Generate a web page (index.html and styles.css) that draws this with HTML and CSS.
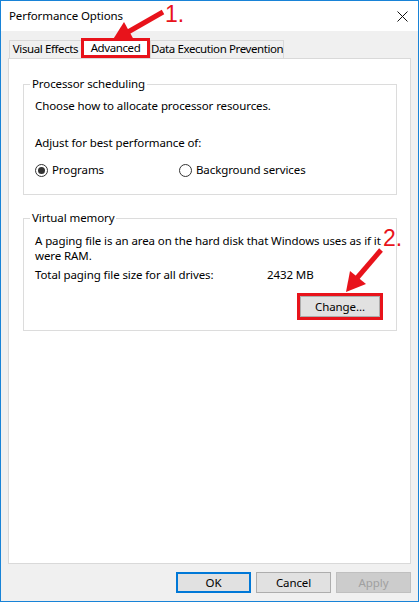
FILE: index.html
```html
<!DOCTYPE html>
<html lang="en">
<head>
    <meta charset="UTF-8">
    <title>Performance Options</title>
    <link rel="stylesheet" href="styles.css">
</head>
<body>
    <div class="window">
        <div class="titlebar">
            <span class="title">Performance Options</span>
            <svg class="close" width="11" height="11" viewBox="0 0 11 11">
                <path d="M0.5 0.5L10.5 10.5M10.5 0.5L0.5 10.5" stroke="#111" stroke-width="1"/>
            </svg>
        </div>

        <div class="content">
            <div class="tabs">
                <div class="tab tab-visual">Visual Effects</div>
                <div class="tab active">Advanced</div>
                <div class="tab tab-dep">Data Execution Prevention</div>
            </div>

            <div class="panel">
                <fieldset class="group group-cpu">
                    <legend>Processor scheduling</legend>
                    <p class="intro">Choose how to allocate processor resources.</p>
                    <p class="adjust">Adjust for best performance of:</p>
                    <div class="radios">
                        <label class="radio"><input type="radio" name="sched" checked> Programs</label>
                        <label class="radio"><input type="radio" name="sched"> Background services</label>
                    </div>
                </fieldset>

                <fieldset class="group group-vm">
                    <legend>Virtual memory</legend>
                    <p class="vm-desc">A paging file is an area on the hard disk that Windows uses as if it were RAM.</p>
                    <div class="vm-total">
                        <span>Total paging file size for all drives:</span>
                        <span>2432 MB</span>
                    </div>
                    <div class="vm-actions">
                        <button class="btn marked">Change...</button>
                    </div>
                </fieldset>
            </div>

            <div class="footer">
                <button class="btn default">OK</button>
                <button class="btn">Cancel</button>
                <button class="btn" disabled>Apply</button>
            </div>
        </div>

        <!-- red tutorial markers drawn over the dialog -->
        <svg class="annotations" width="419" height="602" viewBox="0 0 419 602">
            <line x1="163" y1="12" x2="128" y2="32" stroke="#e8131b" stroke-width="5"/>
            <polygon points="112,41 134,40 124,22" fill="#e8131b"/>
            <text x="165" y="22" class="step">1.</text>

            <line x1="381" y1="250" x2="357" y2="278" stroke="#e8131b" stroke-width="5"/>
            <polygon points="346,292 366,284 350,271" fill="#e8131b"/>
            <text x="383" y="246" class="step">2.</text>
        </svg>
    </div>
</body>
</html>
```

FILE: styles.css
```css
body {
    margin: 0;
    padding: 0;
    font-family: "Noto Sans", sans-serif;
    font-size: 11.5px;
    letter-spacing: -0.1px;
    color: #000;
}
.window {
    position: relative;
    width: 419px;
    height: 602px;
    box-sizing: border-box;
    border: 1px solid #1883d7;
    background-color: #f0f0f0;
    display: flex;
    flex-direction: column;
}
.titlebar {
    height: 30px;
    background: #ffffff;
    display: flex;
    align-items: center;
    justify-content: space-between;
    padding: 0 10px 0 8px;
}
.title {
    line-height: 16px;
}
.close {
    display: block;
}
.content {
    flex: 1;
    display: flex;
    flex-direction: column;
    padding: 0 7px;
}
.tabs {
    display: flex;
    align-items: flex-end;
    height: 20px;
    margin-top: 7px;
    padding-left: 1px;
}
.tab {
    height: 18px;
    box-sizing: border-box;
    border: 1px solid #d9d9d9;
    border-bottom: none;
    line-height: 16px;
    letter-spacing: -0.4px;
    white-space: nowrap;
    text-align: center;
}
.tab-visual {
    width: 73px;
}
.tab.active {
    width: 69px;
    height: 20px;
    border: 3px solid #e8131b;
    background: #ffffff;
    line-height: 14px;
    margin-left: -1px;
}
.tab-dep {
    width: 134px;
}
.panel {
    flex: 1;
    background: #ffffff;
    border: 1px solid #d9d9d9;
    padding: 17px 13px 0 14px;
}
.group {
    margin: 0;
    border: 1px solid #dcdcdc;
    padding: 0 12px 16px 11px;
}
.group legend {
    padding: 0 2px;
    margin-left: -5px;
    line-height: 16px;
}
.group p {
    margin: 0;
    line-height: 16px;
}
.intro {
    padding-top: 6px;
}
.adjust {
    margin-top: 21px !important;
}
.radios {
    display: grid;
    grid-template-columns: 144px auto;
    margin-top: 11px;
    line-height: 16px;
}
.radio {
    display: flex;
    align-items: center;
    gap: 4px;
}
.radio input {
    appearance: none;
    margin: 0;
    width: 13px;
    height: 13px;
    border: 1px solid #333;
    border-radius: 50%;
    background: #fff;
    display: grid;
    place-items: center;
}
.radio input:checked::after {
    content: "";
    width: 7px;
    height: 7px;
    border-radius: 50%;
    background: #333;
}
.group-vm {
    margin-top: 15px;
    padding-bottom: 13px;
}
.group-vm .vm-desc {
    padding-top: 7px;
    line-height: 15px;
}
.vm-total {
    display: grid;
    grid-template-columns: 232px auto;
    margin-top: 4px;
    line-height: 16px;
}
.vm-actions {
    display: flex;
    justify-content: flex-end;
    margin-top: 13px;
    padding-right: 4px;
}
.btn {
    font-family: inherit;
    font-size: 11.5px;
    letter-spacing: -0.1px;
    color: #000;
    height: 21px;
    width: 75px;
    padding: 0;
    background: #e1e1e1;
    border: 1px solid #adadad;
}
.btn.marked {
    width: 80px;
    outline: 3px solid #e8131b;
}
.btn.default {
    border: 2px solid #0078d7;
}
.btn:disabled {
    background: #cccccc;
    border-color: #bfbfbf;
    color: #a0a0a0;
}
.footer {
    display: flex;
    justify-content: flex-end;
    gap: 5px;
    padding: 8px 0 8px;
}
.annotations {
    position: absolute;
    top: -1px;
    left: -1px;
    pointer-events: none;
}
.step {
    font-family: "Liberation Sans", sans-serif;
    font-size: 23px;
    fill: #e8131b;
}
```
